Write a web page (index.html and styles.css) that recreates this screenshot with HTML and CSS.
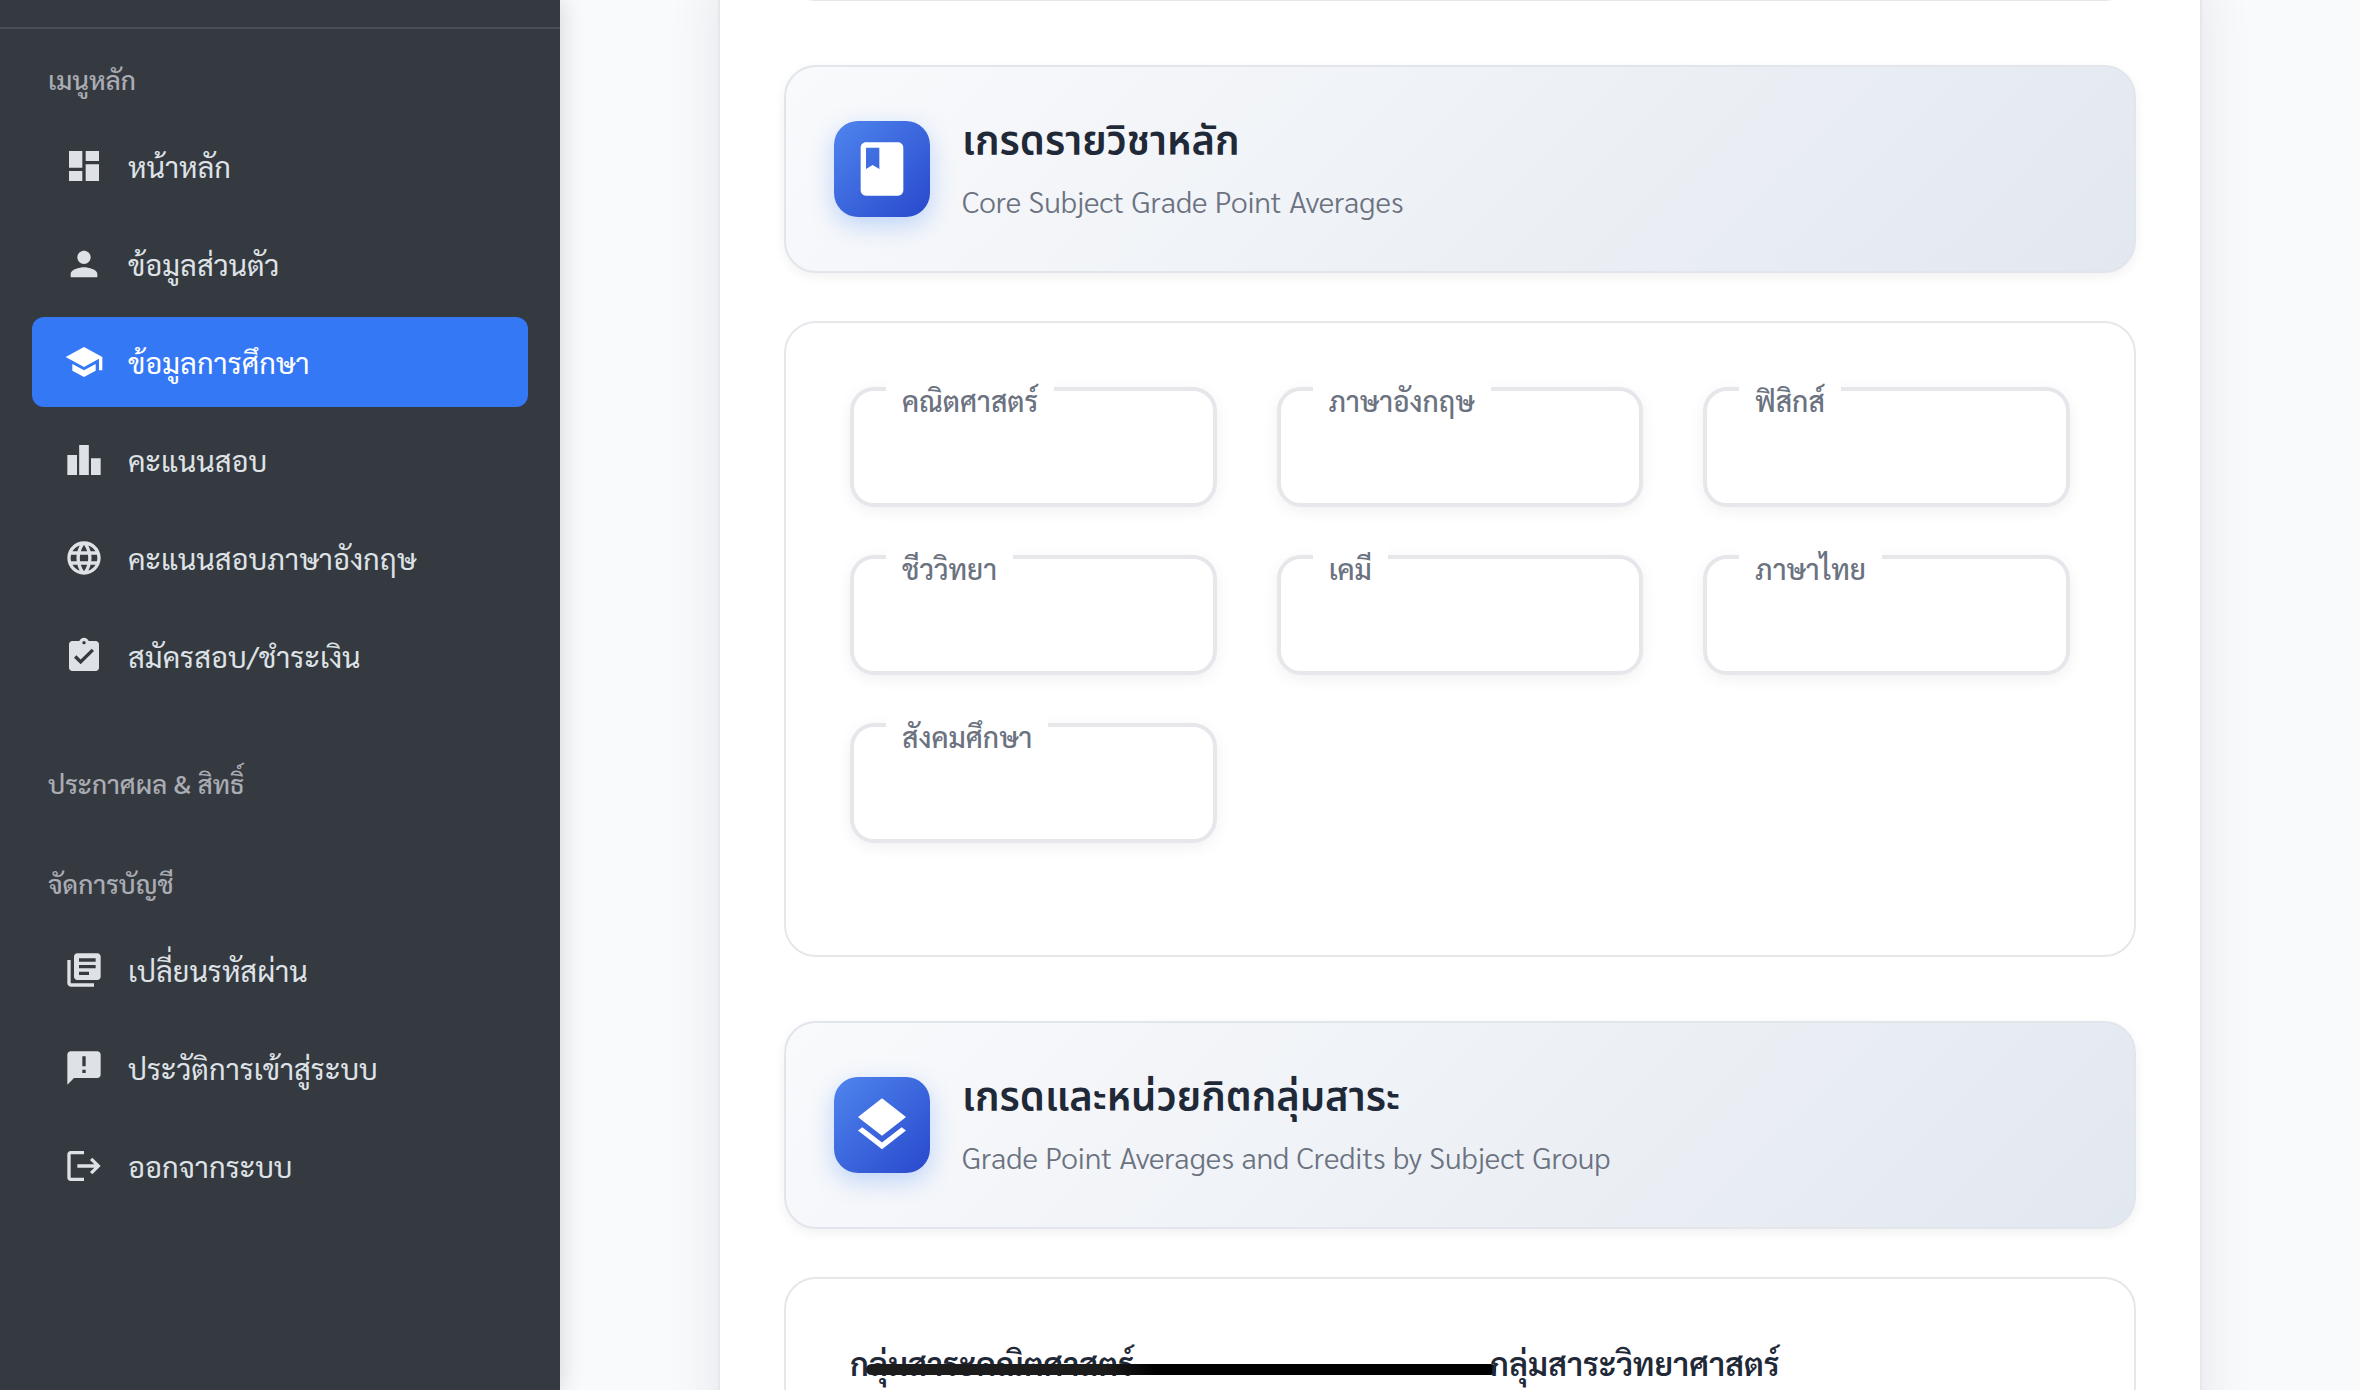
FILE: index.html
```html
<!DOCTYPE html>
<html lang="th">
<head>
<meta charset="utf-8">
<title>ข้อมูลการศึกษา</title>
<meta name="viewport" content="width=device-width, initial-scale=1">
<link rel="stylesheet" href="styles.css">
</head>
<body>
<div class="app">
  <aside class="sidebar">
    <div class="brand"></div>
    <nav class="nav">
      <section class="nav-section">
        <h2 class="nav-title">เมนูหลัก</h2>
        <ul class="nav-list">
          <li><a class="nav-link" href="#home"><svg class="nav-icon" viewBox="0 0 24 24"><path d="M3 13h8V3H3v10zm0 8h8v-6H3v6zm10 0h8V11h-8v10zm0-18v6h8V3h-8z"/></svg>หน้าหลัก</a></li>
          <li><a class="nav-link" href="#profile"><svg class="nav-icon" viewBox="0 0 24 24"><path d="M12 12c2.21 0 4-1.79 4-4s-1.79-4-4-4-4 1.790-4 4 1.790 4 4 4zm0 2c-2.670 0-8 1.340-8 4v2h16v-2c0-2.660-5.330-4-8-4z"/></svg>ข้อมูลส่วนตัว</a></li>
          <li><a class="nav-link active" href="#education" aria-current="page"><svg class="nav-icon" viewBox="0 0 24 24"><path d="M5 13.180v4L12 21l7-3.820v-4L12 17l-7-3.820zM12 3L1 9l11 6 9-4.910V17h2V9L12 3z"/></svg>ข้อมูลการศึกษา</a></li>
          <li><a class="nav-link" href="#scores"><svg class="nav-icon" viewBox="0 0 24 24"><path d="M2 9h5.800v12H2zM9.100 3h5.800v18H9.100zM16.200 11H22v10h-5.800z"/></svg>คะแนนสอบ</a></li>
          <li><a class="nav-link" href="#english"><svg class="nav-icon" viewBox="0 0 24 24"><path d="M11.990 2C6.470 2 2 6.480 2 12s4.470 10 9.990 10C17.520 22 22 17.520 22 12S17.520 2 11.990 2zm6.930 6h-2.950c-.320-1.250-.780-2.450-1.380-3.560 1.840.63 3.370 1.910 4.330 3.560zM12 4.040c.83 1.200 1.480 2.530 1.910 3.960h-3.820c.43-1.430 1.080-2.760 1.910-3.960zM4.260 14C4.100 13.360 4 12.690 4 12s.1-1.360.26-2h3.380c-.08.66-.14 1.320-.14 2s.06 1.340.14 2H4.260zm.82 2h2.950c.32 1.250.78 2.450 1.380 3.560-1.840-.63-3.370-1.900-4.330-3.560zm2.950-8H5.080c.96-1.660 2.490-2.930 4.330-3.560C8.810 5.550 8.350 6.750 8.030 8zM12 19.960c-.83-1.200-1.480-2.530-1.910-3.960h3.820c-.43 1.430-1.080 2.760-1.910 3.960zM14.340 14H9.660c-.09-.66-.16-1.320-.16-2s.07-1.350.16-2h4.680c.09.65.16 1.320.16 2s-.07 1.340-.16 2zm.25 5.560c.6-1.110 1.060-2.310 1.380-3.560h2.950c-.96 1.650-2.490 2.930-4.330 3.560zM16.360 14c.08-.66.14-1.320.14-2s-.06-1.340-.14-2h3.380c.16.64.26 1.310.26 2s-.1 1.360-.26 2h-3.380z"/></svg>คะแนนสอบภาษาอังกฤษ</a></li>
          <li><a class="nav-link" href="#apply"><svg class="nav-icon" viewBox="0 0 24 24"><path fill-rule="evenodd" d="M19 3h-4.180C14.400 1.840 13.300 1 12 1s-2.400.84-2.820 2H5c-1.100 0-2 .9-2 2v14c0 1.100.9 2 2 2h14c1.100 0 2-.9 2-2V5c0-1.100-.9-2-2-2zm-7 0c.55 0 1 .45 1 1s-.45 1-1 1-1-.45-1-1 .45-1 1-1zm-2 14l-4-4 1.410-1.410L10 14.170l6.590-6.590L18 9l-8 8z"/></svg>สมัครสอบ/ชำระเงิน</a></li>
        </ul>
      </section>
      <section class="nav-section">
        <h2 class="nav-title">ประกาศผล &amp; สิทธิ์</h2>
      </section>
      <section class="nav-section">
        <h2 class="nav-title">จัดการบัญชี</h2>
        <ul class="nav-list">
          <li><a class="nav-link" href="#password"><svg class="nav-icon" viewBox="0 0 24 24"><path fill-rule="evenodd" d="M4 6H2v14c0 1.100.9 2 2 2h14v-2H4V6zm16-4H8c-1.100 0-2 .9-2 2v12c0 1.100.9 2 2 2h12c1.100 0 2-.9 2-2V4c0-1.100-.9-2-2-2zm-1 9H9V9h10v2zm-4 4H9v-2h6v2zm4-8H9V5h10v2z"/></svg>เปลี่ยนรหัสผ่าน</a></li>
          <li><a class="nav-link" href="#history"><svg class="nav-icon" viewBox="0 0 24 24"><path fill-rule="evenodd" d="M20 2H4c-1.100 0-2 .9-2 2v18l4-4h14c1.100 0 2-.9 2-2V4c0-1.100-.9-2-2-2zm-7 9h-2V5h2v6zm0 4h-2v-2h2v2z"/></svg>ประวัติการเข้าสู่ระบบ</a></li>
          <li><a class="nav-link" href="#logout"><svg class="nav-icon" viewBox="0 0 24 24"><path d="M17 7l-1.410 1.410L18.170 11H8v2h10.170l-2.580 2.580L17 17l5-5zM4 5h8V3H4c-1.100 0-2 .9-2 2v14c0 1.100.9 2 2 2h8v-2H4V5z"/></svg>ออกจากระบบ</a></li>
        </ul>
      </section>
    </nav>
  </aside>
  <main class="content">
    <div class="card">
      <div class="panel panel-tail"></div>

      <header class="section-head">
        <span class="tile"><svg class="tile-icon" viewBox="0 0 24 24"><path fill-rule="evenodd" d="M18 2H6c-1.100 0-2 .9-2 2v16c0 1.100.9 2 2 2h12c1.100 0 2-.9 2-2V4c0-1.100-.9-2-2-2zM6 4h5v8l-2.500-1.500L6 12V4z"/></svg></span>
        <div class="head-text">
          <h2 class="head-title">เกรดรายวิชาหลัก</h2>
          <p class="head-sub">Core Subject Grade Point Averages</p>
        </div>
      </header>
      <form class="panel fields">
        <div class="field"><input class="field-input" id="math" type="text"><label class="field-label" for="math">คณิตศาสตร์</label></div>
        <div class="field"><input class="field-input" id="eng" type="text"><label class="field-label" for="eng">ภาษาอังกฤษ</label></div>
        <div class="field"><input class="field-input" id="phy" type="text"><label class="field-label" for="phy">ฟิสิกส์</label></div>
        <div class="field"><input class="field-input" id="bio" type="text"><label class="field-label" for="bio">ชีววิทยา</label></div>
        <div class="field"><input class="field-input" id="chem" type="text"><label class="field-label" for="chem">เคมี</label></div>
        <div class="field"><input class="field-input" id="thai" type="text"><label class="field-label" for="thai">ภาษาไทย</label></div>
        <div class="field"><input class="field-input" id="soc" type="text"><label class="field-label" for="soc">สังคมศึกษา</label></div>
      </form>

      <header class="section-head">
        <span class="tile"><svg class="tile-icon" viewBox="0 0 24 24"><path d="M11.990 18.540l-7.370-5.730L3 14.070l9 7 9-7-1.630-1.270-7.380 5.740zM12 16l7.360-5.730L21 9l-9-7-9 7 1.630 1.270L12 16z"/></svg></span>
        <div class="head-text">
          <h2 class="head-title">เกรดและหน่วยกิตกลุ่มสาระ</h2>
          <p class="head-sub">Grade Point Averages and Credits by Subject Group</p>
        </div>
      </header>
      <div class="panel groups">
        <h3 class="group-title">กลุ่มสาระคณิตศาสตร์<span class="marker"></span></h3>
        <h3 class="group-title">กลุ่มสาระวิทยาศาสตร์</h3>
      </div>
    </div>
  </main>
</div>
</body>
</html>
```
FILE: styles.css
```css
* {
  box-sizing: border-box;
}

body {
  margin: 0;
  font-family: "Sarabun", "Noto Sans Thai Looped", "Noto Sans", sans-serif;
  color: #1f2937;
  background: #f9fafc;
}

h2, h3, p, ul {
  margin: 0;
  padding: 0;
}

.app {
  display: flex;
  height: 100vh;
  overflow: hidden;
}

/* Sidebar */
.sidebar {
  position: relative;
  z-index: 1;
  flex: 0 0 560px;
  background: #353940;
  box-shadow: 4px 0 20px rgba(0, 0, 0, 0.12);
}

.brand {
  height: 29px;
  border-bottom: 2px solid #4b5057;
}

.nav {
  display: flex;
  flex-direction: column;
  gap: 20px;
  padding: 12px 32px;
}

.nav-title {
  padding: 0 16px 4px;
  font-size: 26px;
  font-weight: 500;
  line-height: 76px;
  color: #a9acb3;
}

.nav-list {
  display: flex;
  flex-direction: column;
  gap: 8px;
  padding-bottom: 24px;
  list-style: none;
}

.nav-link {
  display: flex;
  align-items: center;
  gap: 24px;
  height: 90px;
  padding: 0 32px;
  border-radius: 12px;
  font-size: 29px;
  color: #dee2e6;
  text-decoration: none;
  white-space: nowrap;
}

.nav-link.active {
  background: #3478f6;
  color: #fff;
}

.nav-icon {
  width: 40px;
  height: 40px;
  fill: currentColor;
}

/* Main column */
.content {
  flex: 1;
  min-width: 0;
  padding: 0 158px;
}

.card {
  min-height: 110vh;
  margin-top: -32px;
  padding: 0 64px;
  border: 2px solid #e5e7eb;
  border-width: 0 2px;
  background: #fff;
  box-shadow: 0 16px 48px rgba(31, 41, 55, 0.1);
}

.panel {
  border: 2px solid #e5e7eb;
  border-radius: 32px;
  background: #fff;
}

.panel-tail {
  height: 33px;
  border-top: 0;
  border-radius: 0 0 32px 32px;
}

.section-head {
  display: flex;
  align-items: center;
  gap: 32px;
  height: 208px;
  margin: 64px 0 48px;
  padding: 0 48px;
  border: 2px solid #e2e5ec;
  border-radius: 32px;
  background: linear-gradient(135deg, #f9fafc 0%, #e2e8f0 100%);
  box-shadow: 0 4px 12px rgba(0, 0, 0, 0.06);
}

.tile {
  display: grid;
  place-items: center;
  width: 96px;
  height: 96px;
  border-radius: 24px;
  background: linear-gradient(135deg, #4f85ee, #2848cc);
  box-shadow: 0 8px 24px rgba(59, 130, 246, 0.3);
}

.tile-icon {
  width: 64px;
  height: 64px;
  fill: #fff;
}

.head-text {
  display: flex;
  flex-direction: column;
  gap: 4px;
}

.head-title {
  font-family: "Noto Sans Thai", "Noto Sans", sans-serif;
  font-size: 40px;
  font-weight: 600;
  line-height: 60px;
}

.head-sub {
  font-size: 30px;
  font-weight: 300;
  line-height: 48px;
  color: #6b7280;
}

.fields {
  display: grid;
  grid-template-columns: repeat(3, 1fr);
  gap: 48px 60px;
  padding: 64px 64px 112px;
}

.field {
  position: relative;
}

.field-input {
  display: block;
  width: 100%;
  height: 120px;
  padding: 0 32px;
  border: 4px solid #e5e7eb;
  border-radius: 24px;
  background: #fff;
  box-shadow: 0 4px 16px rgba(0, 0, 0, 0.06);
  font: inherit;
  font-size: 30px;
}

/* Floating label laid over the top border of its input */
.field-label {
  position: absolute;
  top: -12px;
  left: 36px;
  padding: 0 16px;
  border-radius: 8px;
  background: #fff;
  font-size: 28px;
  font-weight: 500;
  line-height: 50px;
  color: #6b7280;
}

.groups {
  display: grid;
  grid-template-columns: repeat(2, 1fr);
  gap: 60px;
  min-height: 400px;
  padding: 60px 64px;
}

.group-title {
  position: relative;
  font-size: 32px;
  font-weight: 600;
  line-height: 48px;
}

/* Redaction stroke drawn over the heading */
.marker {
  position: absolute;
  top: 25px;
  left: 16px;
  right: -66px;
  height: 11px;
  border-radius: 6px;
  background: linear-gradient(90deg, #1c1c1c 0%, #1c1c1c 38%, #000 46%);
}
```
